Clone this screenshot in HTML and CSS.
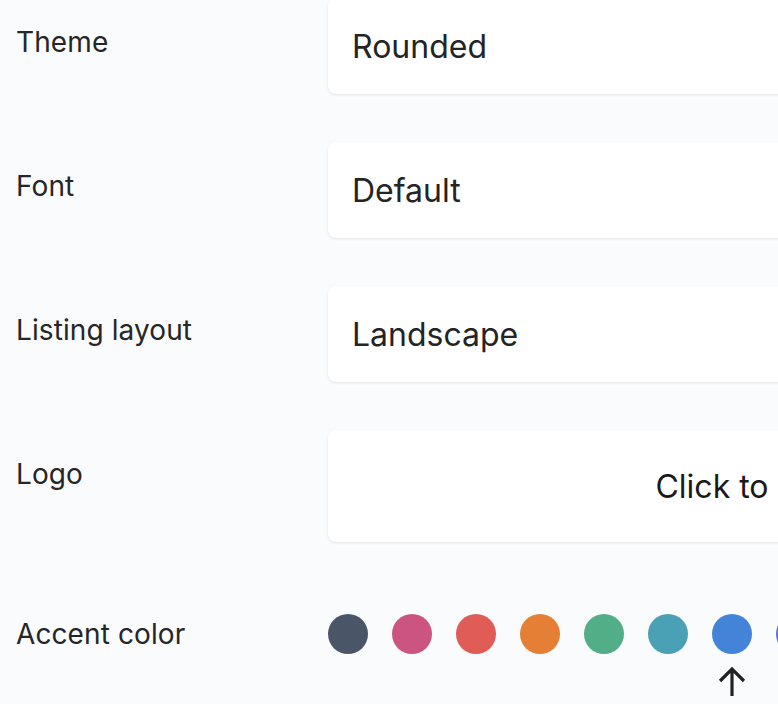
FILE: index.html
```html
<!DOCTYPE html>
<html lang="en">
<head>
<meta charset="utf-8">
<title>Settings</title>
<link rel="stylesheet" href="styles.css">
</head>
<body>
<div class="settings">
  <div class="label">Theme</div>
  <div class="field"><div class="select">Rounded</div></div>

  <div class="label">Font</div>
  <div class="field"><div class="select">Default</div></div>

  <div class="label">Listing layout</div>
  <div class="field"><div class="select">Landscape</div></div>

  <div class="label">Logo</div>
  <div class="field"><div class="upload">Click to</div></div>

  <div class="label">Accent color</div>
  <div class="field">
    <div class="swatches">
      <div class="swatch"><span class="dot c1"></span></div>
      <div class="swatch"><span class="dot c2"></span></div>
      <div class="swatch"><span class="dot c3"></span></div>
      <div class="swatch"><span class="dot c4"></span></div>
      <div class="swatch"><span class="dot c5"></span></div>
      <div class="swatch"><span class="dot c6"></span></div>
      <div class="swatch selected"><span class="dot c7"></span>
        <svg class="arrow" width="28" height="32" viewBox="0 0 28 32" aria-hidden="true">
          <path d="M14 30 V3 M2 15 L14 3 L26 15" fill="none" stroke="#222" stroke-width="3.2"/>
        </svg>
      </div>
      <div class="swatch"><span class="dot c8"></span></div>
    </div>
  </div>
</div>
</body>
</html>
```

FILE: styles.css
```css
html, body {
  margin: 0;
  padding: 0;
  background: #fafbfd;
  overflow: hidden;
}

body {
  font-family: Inter, "Noto Sans", sans-serif;
  color: #262626;
}

.settings {
  display: grid;
  grid-template-columns: 312px 900px;
  row-gap: 48px;
  margin-top: -2px;
  padding-left: 16px;
  align-items: start;
}

.label {
  font-size: 28px;
  line-height: 40px;
  padding-top: 24px;
  letter-spacing: 0.1px;
  white-space: nowrap;
}

.field {
  min-width: 0;
}

.select {
  height: 96px;
  box-sizing: border-box;
  background: #fff;
  border-radius: 8px;
  box-shadow: 0 1px 3px rgba(0, 0, 0, 0.09);
  display: flex;
  align-items: center;
  padding-left: 24px;
  font-size: 32px;
  color: #242424;
}

.upload {
  height: 112px;
  width: 768px;
  box-sizing: border-box;
  background: #fff;
  border-radius: 8px;
  box-shadow: 0 1px 3px rgba(0, 0, 0, 0.09);
  display: flex;
  align-items: center;
  justify-content: center;
  font-size: 32px;
  color: #1a1a1a;
}

.swatches {
  display: flex;
  gap: 24px;
  padding-top: 24px;
}

.swatch {
  display: flex;
  flex-direction: column;
  align-items: center;
  gap: 12px;
}

.dot {
  display: block;
  width: 40px;
  height: 40px;
  border-radius: 50%;
}

.c1 { background: #4a5568; }
.c2 { background: #cc5480; }
.c3 { background: #df5c57; }
.c4 { background: #e47f35; }
.c5 { background: #52ae87; }
.c6 { background: #4aa0b5; }
.c7 { background: #4383d8; }
.c8 { background: #5f70dc; }

.arrow {
  display: block;
}
```
